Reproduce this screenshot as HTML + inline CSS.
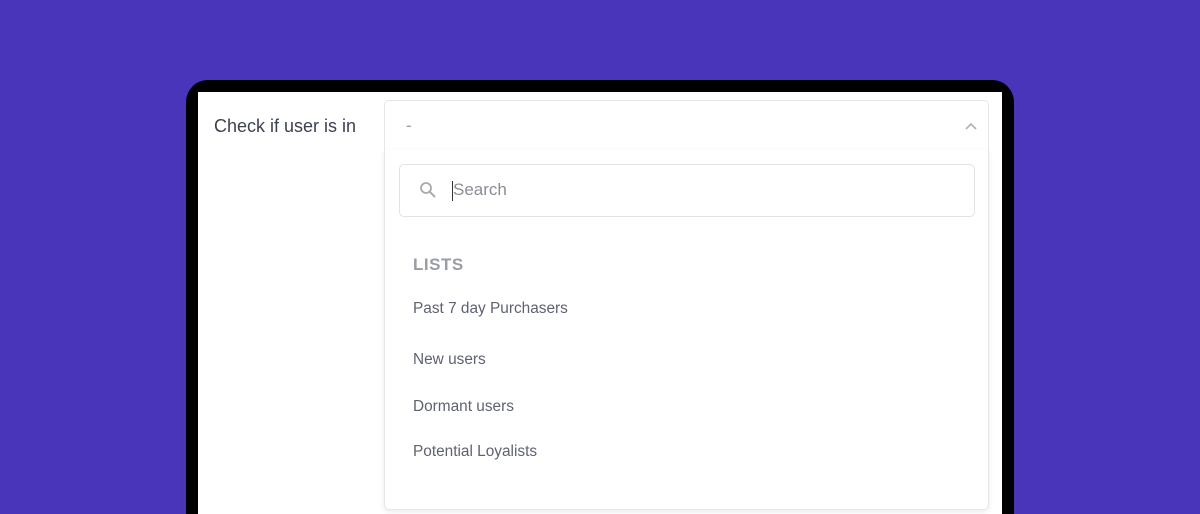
<!DOCTYPE html>
<html style="overflow:hidden;height:514px"><head><style>
html,body{overflow:hidden}
body{margin:0;width:1200px;height:514px;background:#4935B9;position:relative;font-family:"Liberation Sans",sans-serif}
.frame{position:absolute;left:186px;top:80px;width:828px;height:434px;background:#000;border-radius:22px 22px 0 0}
.inner{position:absolute;left:198px;top:92px;width:804px;height:422px;background:#fff}
.lbl{position:absolute;left:214px;top:116px;font-size:18px;color:#3d4150}
.sel{position:absolute;left:384px;top:100px;width:603px;height:49px;border:1px solid #e6e6ea;border-bottom:1px solid #e2e2e6;border-radius:5px 5px 0 0;background:#fff}
.dash{position:absolute;left:406px;top:116px;font-size:17px;color:#999}
.panel{position:absolute;left:384px;top:150px;width:603px;height:359px;border:1px solid #e6e6ea;border-top:none;border-radius:0 0 5px 5px;background:#fff;box-shadow:0 2px 6px rgba(0,0,0,.08)}
.search{position:absolute;left:399px;top:164px;width:574px;height:51px;border:1px solid #e3e3e7;border-radius:5px}
.ph{position:absolute;left:453px;top:180px;font-size:17px;color:#8a8d96}
.caret{position:absolute;left:452px;top:181px;width:1px;height:20px;background:#333}
.it{position:absolute;left:413px;font-size:15.4px;color:#5f6270}
.hd{position:absolute;left:413px;top:255px;font-size:17px;font-weight:bold;color:#9a9ca6;letter-spacing:.5px}
</style></head><body>
<div class="frame"></div><div class="inner"></div>
<div class="lbl">Check if user is in</div>
<div class="sel"></div>
<div class="dash">-</div>
<svg style="position:absolute;left:964px;top:121px" width="14" height="10"><path d="M2 8 L7 3 L12 8" fill="none" stroke="#b5b5b8" stroke-width="1.8"/></svg>
<div class="panel"></div>
<div class="search"></div>
<svg style="position:absolute;left:419px;top:181px" width="18" height="18"><circle cx="7" cy="7" r="5" fill="none" stroke="#aaa" stroke-width="1.8"/><path d="M11 11 L16 16" stroke="#aaa" stroke-width="2"/></svg>
<div class="caret"></div>
<div class="ph">Search</div>
<div class="hd">LISTS</div>
<div class="it" style="top:300px">Past 7 day Purchasers</div>
<div class="it" style="top:351px">New users</div>
<div class="it" style="top:398px">Dormant users</div>
<div class="it" style="top:443px">Potential Loyalists</div>
</body></html>
